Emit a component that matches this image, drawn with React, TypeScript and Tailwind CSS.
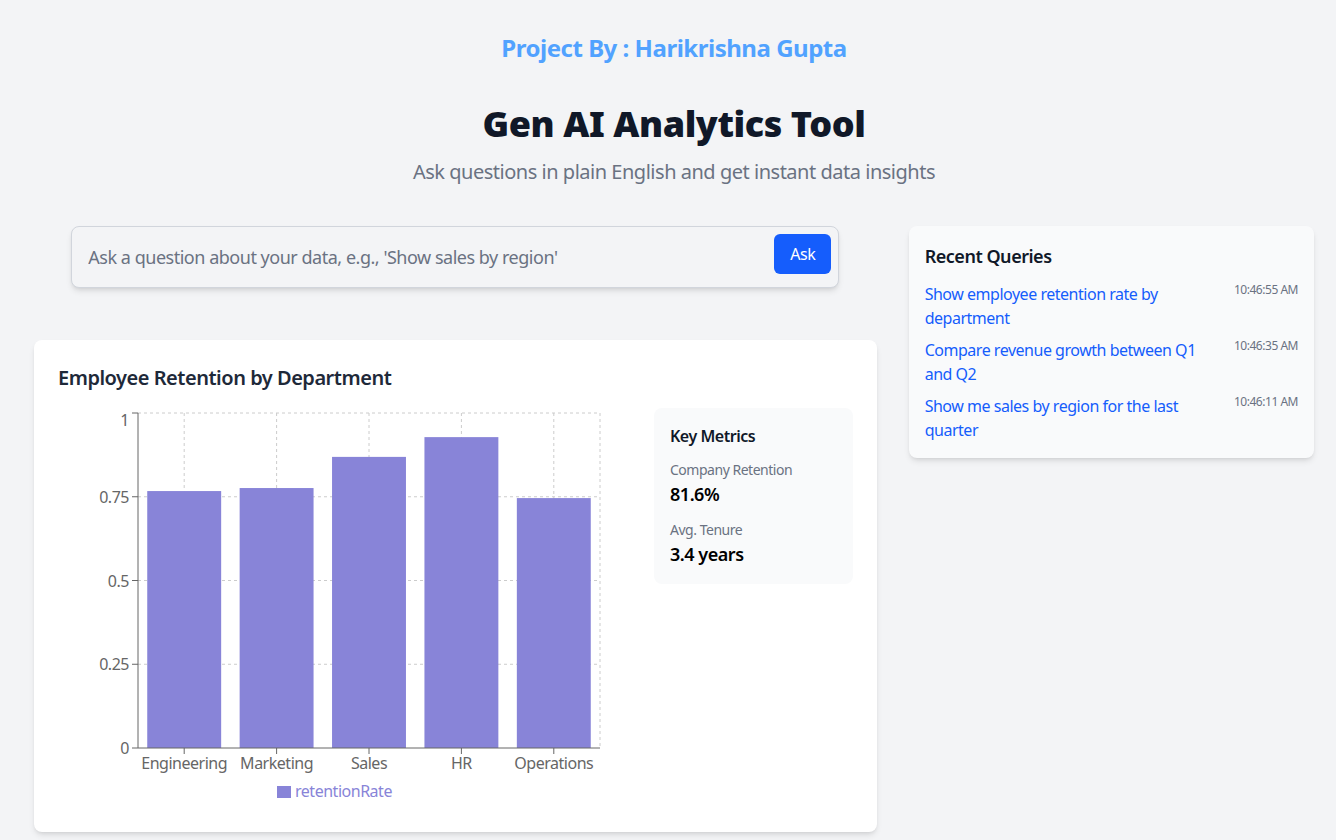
import { useState } from 'react'

const FONT = { fontFamily: '"Noto Sans", "Open Sans", sans-serif' }

const retention = [
  { department: 'Engineering', retentionRate: 0.767 },
  { department: 'Marketing', retentionRate: 0.776 },
  { department: 'Sales', retentionRate: 0.869 },
  { department: 'HR', retentionRate: 0.928 },
  { department: 'Operations', retentionRate: 0.746 },
]

const recentQueries = [
  { text: 'Show employee retention rate by department', time: '10:46:55 AM' },
  { text: 'Compare revenue growth between Q1 and Q2', time: '10:46:35 AM' },
  { text: 'Show me sales by region for the last quarter', time: '10:46:11 AM' },
]

function RetentionChart() {
  const width = 572
  const height = 400
  const left = 80
  const right = 542
  const top = 5
  const bottom = 340
  const band = (right - left) / retention.length
  const gap = band * 0.1
  const y = (v: number) => bottom - (bottom - top) * v
  const yTicks = [0, 0.25, 0.5, 0.75, 1]

  return (
    <svg width={width} height={height} className="block overflow-visible" style={FONT}>
      {/* grid */}
      <g stroke="#ccc" strokeDasharray="3 3" fill="none">
        {yTicks.slice(1).map((t) => (
          <line key={t} x1={left} x2={right} y1={y(t)} y2={y(t)} />
        ))}
        {retention.map((_, i) => (
          <line
            key={i}
            x1={left + band * i + band / 2}
            x2={left + band * i + band / 2}
            y1={top}
            y2={bottom}
          />
        ))}
        <line x1={right} x2={right} y1={top} y2={bottom} />
      </g>

      {/* bars */}
      {retention.map((d, i) => (
        <rect
          key={d.department}
          x={left + band * i + gap}
          y={y(d.retentionRate)}
          width={band - gap * 2}
          height={bottom - y(d.retentionRate)}
          fill="#8884d8"
        />
      ))}

      {/* y axis */}
      <g stroke="#666" fill="none">
        <line x1={left} x2={left} y1={top} y2={bottom} />
        {yTicks.map((t) => (
          <line key={t} x1={left - 6} x2={left} y1={y(t)} y2={y(t)} />
        ))}
      </g>
      <g fill="#666" fontSize="16" textAnchor="end">
        {yTicks.map((t) => (
          <text key={t} x={left - 9} y={t === 1 ? y(t) + 13 : y(t) + 6}>
            {t}
          </text>
        ))}
      </g>

      {/* x axis */}
      <g stroke="#666" fill="none">
        <line x1={left} x2={right} y1={bottom} y2={bottom} />
        {retention.map((_, i) => (
          <line
            key={i}
            x1={left + band * i + band / 2}
            x2={left + band * i + band / 2}
            y1={bottom}
            y2={bottom + 6}
          />
        ))}
      </g>
      <g fill="#666" fontSize="16" textAnchor="middle">
        {retention.map((d, i) => (
          <text key={d.department} x={left + band * i + band / 2} y={bottom + 21}>
            {d.department}
          </text>
        ))}
      </g>

      {/* legend */}
      <rect x={219} y={378} width={14} height={12} fill="#8884d8" />
      <text x={237} y={389} fill="#8884d8" fontSize="16">
        retentionRate
      </text>
    </svg>
  )
}

export default function App() {
  const [query, setQuery] = useState('')

  return (
    <div className="min-h-screen bg-gray-100 pt-8 pb-2 pl-3 tracking-[-0.03em]" style={FONT}>
      <header className="text-center">
        <p className="text-2xl font-bold text-blue-400">Project By : Harikrishna Gupta</p>
        <h1 className="mt-10 text-4xl font-black tracking-[-0.012em] text-gray-900">
          Gen AI Analytics Tool
        </h1>
        <p className="mt-3.5 text-xl text-gray-500">
          Ask questions in plain English and get instant data insights
        </p>
      </header>

      <main className="mt-10 px-[22px]">
        <div className="grid grid-cols-3 gap-8">
          <div className="col-span-2">
            <form className="relative mx-auto max-w-3xl" onSubmit={(e) => e.preventDefault()}>
              <input
                value={query}
                onChange={(e) => setQuery(e.target.value)}
                placeholder="Ask a question about your data, e.g., 'Show sales by region'"
                className="w-full rounded-lg border border-gray-300 bg-gray-100 px-4 py-4 text-lg leading-7 text-gray-900 shadow-md outline-none placeholder:text-gray-500"
              />
              <button
                type="submit"
                className="absolute top-2 right-2 rounded-md bg-blue-600 px-4 py-2 text-base text-white"
              >
                Ask
              </button>
            </form>

            <section className="mt-[52px] rounded-lg bg-white p-6 shadow-md">
              <h2 className="mb-4 text-xl leading-7 font-semibold text-gray-800">
                Employee Retention by Department
              </h2>
              <div className="flex gap-6">
                <div className="flex-1">
                  <RetentionChart />
                </div>
                <div className="w-1/4 self-start rounded-lg bg-gray-50 p-4">
                  <h3 className="mb-3 text-base font-semibold text-gray-900">Key Metrics</h3>
                  <div className="space-y-3">
                    <div>
                      <p className="text-sm text-gray-500">Company Retention</p>
                      <p className="text-lg font-semibold text-black">81.6%</p>
                    </div>
                    <div>
                      <p className="text-sm text-gray-500">Avg. Tenure</p>
                      <p className="text-lg font-semibold text-black">3.4 years</p>
                    </div>
                  </div>
                </div>
              </div>
            </section>
          </div>

          <aside className="self-start rounded-lg bg-gray-50 p-4 shadow-md">
            <h2 className="mb-3 text-lg font-semibold text-gray-900">Recent Queries</h2>
            <ul className="space-y-2">
              {recentQueries.map((q) => (
                <li key={q.time} className="flex items-start justify-between gap-4">
                  <button className="flex-1 text-left text-base text-blue-600">{q.text}</button>
                  <span className="whitespace-nowrap text-xs text-gray-500">{q.time}</span>
                </li>
              ))}
            </ul>
          </aside>
        </div>
      </main>
    </div>
  )
}
